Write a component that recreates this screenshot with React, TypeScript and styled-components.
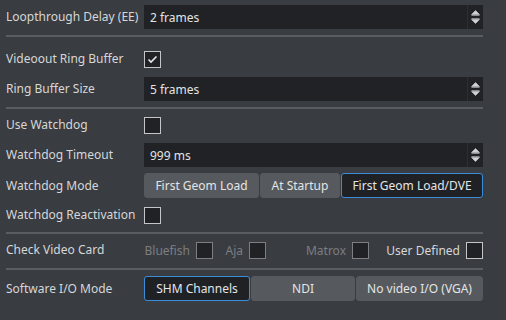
import React from "react";
import styled, { createGlobalStyle } from "styled-components";

const Global = createGlobalStyle`
  html, body { margin: 0; padding: 0; background: #393c41; }
  body { font-family: "Noto Sans", "Open Sans", sans-serif; font-size: 12px; color: #d6d7d8; }
`;

const Panel = styled.div`
  width: 506px;
  height: 320px;
  box-sizing: border-box;
  padding: 5px 23px 0 6px;
  display: flex;
  flex-direction: column;
  background: #393c41;
`;

const Row = styled.div<{ $h?: number; $mt?: number }>`
  display: grid;
  grid-template-columns: 138px 1fr;
  align-items: center;
  height: ${(p) => p.$h ?? 24}px;
  margin-top: ${(p) => p.$mt ?? 0}px;
`;

const Label = styled.div`
  white-space: nowrap;
  color: #d6d7d8;
  line-height: 16px;
`;

const Separator = styled.div<{ $mt: number }>`
  height: 2px;
  margin-top: ${(p) => p.$mt}px;
  background: #5a5d61;
`;

const Spin = styled.div`
  height: 24px;
  display: flex;
  background: #202226;
  box-sizing: border-box;
`;

const SpinValue = styled.div`
  flex: 1;
  display: flex;
  align-items: center;
  padding-left: 6px;
  color: #e2e3e4;
`;

const SpinArrows = styled.div`
  width: 15px;
  border-left: 1px solid #2c2e33;
  display: flex;
  flex-direction: column;
  align-items: center;
  justify-content: center;
  gap: 2px;
  color: #d0d1d2;
`;

const Box = styled.div<{ $dim?: boolean }>`
  width: 17px;
  height: 17px;
  box-sizing: border-box;
  border: 1px solid ${(p) => (p.$dim ? "#7c7e81" : "#c4c5c6")};
  background: #202226;
  display: flex;
  align-items: center;
  justify-content: center;
`;

const Buttons = styled.div<{ $cols: string }>`
  display: grid;
  grid-template-columns: ${(p) => p.$cols};
  gap: 1px;
  height: 25px;
`;

const Btn = styled.div<{ $active?: boolean }>`
  display: flex;
  align-items: center;
  justify-content: center;
  border-radius: 3px;
  box-sizing: border-box;
  white-space: nowrap;
  color: #e4e5e6;
  background: ${(p) => (p.$active ? "#1f2125" : "#56595d")};
  border: 1px solid ${(p) => (p.$active ? "#3b8ddb" : "#56595d")};
`;

const CardRow = styled.div`
  display: flex;
  align-items: center;
  height: 24px;
`;

const CardItem = styled.div<{ $dim?: boolean; $w: number }>`
  display: flex;
  align-items: center;
  justify-content: flex-end;
  gap: 6px;
  width: ${(p) => p.$w}px;
  color: ${(p) => (p.$dim ? "#7b7e82" : "#d6d7d8")};
  white-space: nowrap;
`;

const Arrow = ({ up }: { up?: boolean }) => (
  <svg width="9" height="6" viewBox="0 0 9 6">
    {up ? (
      <path d="M4.5 0.5 L8.5 4.5 L0.5 4.5 Z M0.5 5.5 H8.5" fill="currentColor" stroke="currentColor" strokeWidth="0.6" />
    ) : (
      <path d="M0.5 1.5 L8.5 1.5 L4.5 5.5 Z M0.5 0.5 H8.5" fill="currentColor" stroke="currentColor" strokeWidth="0.6" />
    )}
  </svg>
);

const SpinBox = ({ value }: { value: string }) => (
  <Spin>
    <SpinValue>{value}</SpinValue>
    <SpinArrows>
      <Arrow up />
      <Arrow />
    </SpinArrows>
  </Spin>
);

const Check = ({ checked, dim }: { checked?: boolean; dim?: boolean }) => (
  <Box $dim={dim}>
    {checked && (
      <svg width="11" height="9" viewBox="0 0 11 9">
        <path d="M1.5 4.5 L4 7 L9.5 1.5" fill="none" stroke="#e8e8e8" strokeWidth="1.6" />
      </svg>
    )}
  </Box>
);

export default function App() {
  return (
    <>
      <Global />
      <Panel>
        <Row>
          <Label>Loopthrough Delay (EE)</Label>
          <SpinBox value="2 frames" />
        </Row>
        <Separator $mt={6} />
        <Row $mt={10}>
          <Label>Videoout Ring Buffer</Label>
          <Check checked />
        </Row>
        <Row $mt={6}>
          <Label>Ring Buffer Size</Label>
          <SpinBox value="5 frames" />
        </Row>
        <Separator $mt={6} />
        <Row $mt={4}>
          <Label>Use Watchdog</Label>
          <Check />
        </Row>
        <Row $mt={6}>
          <Label>Watchdog Timeout</Label>
          <SpinBox value="999 ms" />
        </Row>
        <Row $mt={6} $h={25}>
          <Label>Watchdog Mode</Label>
          <Buttons $cols="115px 80px 1fr">
            <Btn>First Geom Load</Btn>
            <Btn>At Startup</Btn>
            <Btn $active>First Geom Load/DVE</Btn>
          </Buttons>
        </Row>
        <Row $mt={5}>
          <Label>Watchdog Reactivation</Label>
          <Check />
        </Row>
        <Separator $mt={5} />
        <Row $mt={4}>
          <Label>Check Video Card</Label>
          <CardRow>
            <CardItem $dim $w={69}>Bluefish<Check dim /></CardItem>
            <CardItem $dim $w={53}>Aja<Check dim /></CardItem>
            <CardItem $dim $w={103}>Matrox<Check dim /></CardItem>
            <CardItem $w={114}>User Defined<Check /></CardItem>
          </CardRow>
        </Row>
        <Separator $mt={6} />
        <Row $mt={6} $h={25}>
          <Label>Software I/O Mode</Label>
          <Buttons $cols="106px 104px 1fr">
            <Btn $active>SHM Channels</Btn>
            <Btn>NDI</Btn>
            <Btn>No video I/O (VGA)</Btn>
          </Buttons>
        </Row>
      </Panel>
    </>
  );
}
